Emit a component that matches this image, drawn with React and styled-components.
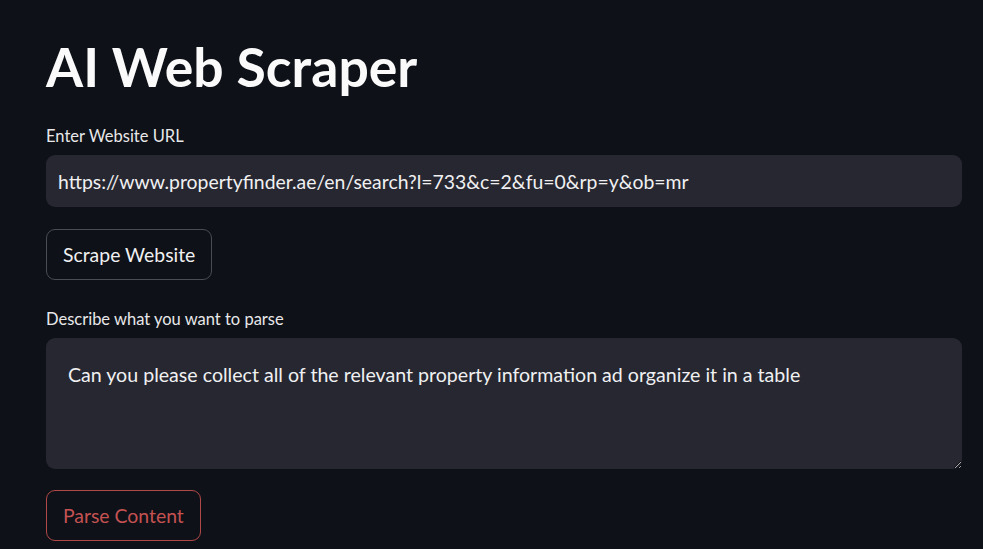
import styled, { createGlobalStyle } from 'styled-components';

const GlobalStyle = createGlobalStyle`
  html, body {
    margin: 0;
    padding: 0;
    background: #0e1117;
  }
  body {
    font-family: Lato, 'Noto Sans', sans-serif;
    color: #fafafa;
  }
`;

const Page = styled.main`
  width: 983px;
  height: 549px;
  overflow: hidden;
  box-sizing: border-box;
  padding: 34px 21px 0 46px;
  display: flex;
  flex-direction: column;
  background: #0e1117;
`;

const Title = styled.h1`
  margin: 0;
  font-size: 53.5px;
  line-height: 64px;
  font-weight: 700;
  color: #fafafa;
`;

const Field = styled.div`
  display: flex;
  flex-direction: column;
  gap: 9px;
  margin-top: ${(p) => p.$top}px;
`;

const Label = styled.label`
  font-size: 16.5px;
  line-height: 20px;
  color: #e8e8ea;
`;

const TextInput = styled.input`
  box-sizing: border-box;
  width: 100%;
  height: 52px;
  border: none;
  outline: none;
  border-radius: 9px;
  background: #262730;
  color: #f0f0f2;
  font-family: inherit;
  font-size: 19.4px;
  padding: 0 12px;
`;

const TextArea = styled.textarea`
  box-sizing: border-box;
  width: 100%;
  height: 131px;
  border: none;
  outline: none;
  border-radius: 9px;
  background: #262730;
  color: #f0f0f2;
  font-family: inherit;
  font-size: 19.6px;
  line-height: 26px;
  padding: 24px 22px;
  resize: vertical;
`;

const Button = styled.button`
  align-self: flex-start;
  margin-top: ${(p) => p.$top}px;
  height: 51px;
  box-sizing: border-box;
  padding: 0 16px;
  border-radius: 9px;
  background: #0e1117;
  font-family: inherit;
  font-size: 19.4px;
  border: 1px solid ${(p) => (p.$danger ? '#b04848' : '#4a4c55')};
  color: ${(p) => (p.$danger ? '#c45252' : '#f0f0f2')};
`;

export default function App() {
  return (
    <>
      <GlobalStyle />
      <Page>
        <Title>AI Web Scraper</Title>
        <Field $top={28}>
          <Label>Enter Website URL</Label>
          <TextInput
            readOnly
            value="https://www.propertyfinder.ae/en/search?l=733&c=2&fu=0&rp=y&ob=mr"
          />
        </Field>
        <Button $top={22}>Scrape Website</Button>
        <Field $top={29}>
          <Label>Describe what you want to parse</Label>
          <TextArea
            readOnly
            value="Can you please collect all of the relevant property information ad organize it in a table"
          />
        </Field>
        <Button $top={21} $danger>
          Parse Content
        </Button>
      </Page>
    </>
  );
}
